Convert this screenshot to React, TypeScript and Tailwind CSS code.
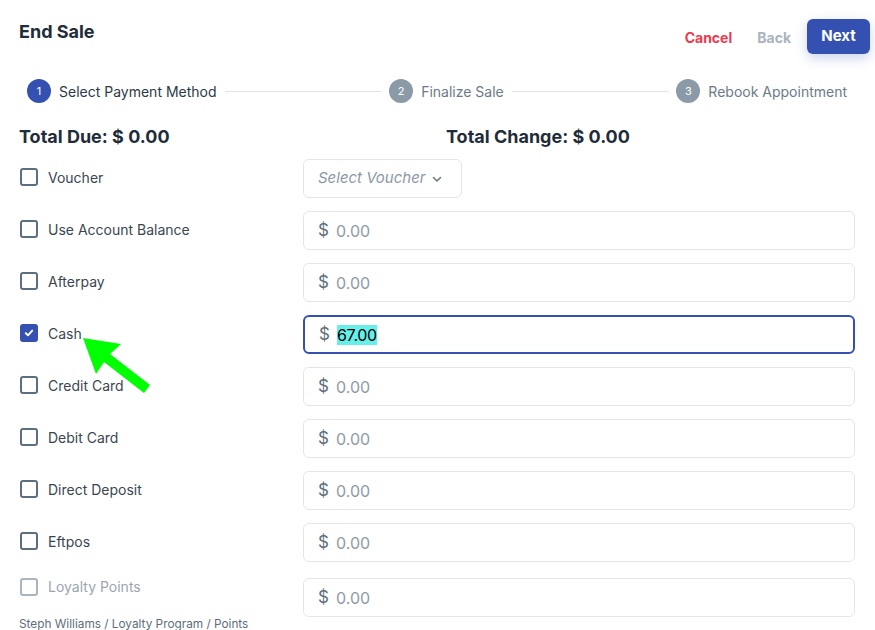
import React from "react";

const rows = [
  { label: "Voucher", kind: "voucher" },
  { label: "Use Account Balance" },
  { label: "Afterpay" },
  { label: "Cash", checked: true, value: "67.00" },
  { label: "Credit Card" },
  { label: "Debit Card" },
  { label: "Direct Deposit" },
  { label: "Eftpos" },
];

function Checkbox({ checked, disabled }: { checked?: boolean; disabled?: boolean }) {
  if (checked) {
    return (
      <div className="w-[18px] h-[18px] rounded-[3px] bg-[#3451b2] flex items-center justify-center shrink-0">
        <svg width="10" height="10" viewBox="0 0 10 10" fill="none">
          <path d="M1.8 5.2 L4 7.3 L8.2 2.6" stroke="white" strokeWidth="1.9" strokeLinecap="round" strokeLinejoin="round" />
        </svg>
      </div>
    );
  }
  return (
    <div
      className={
        "w-[18px] h-[18px] rounded-[3px] border-2 shrink-0 bg-white " +
        (disabled ? "border-[#a9b5c0]" : "border-[#5d6f7f]")
      }
    />
  );
}

function MoneyInput({ value, focused }: { value?: string; focused?: boolean }) {
  return (
    <div
      className={
        "h-[39px] flex items-center rounded-[6px] bg-white pl-[14px] " +
        (focused ? "border-2 border-[#3451b2] pl-[13px]" : "border border-[#e3e6e9]")
      }
    >
      <span className="text-[17px] text-[#5f6f7e] w-[18px]">$</span>
      {value ? (
        <span className="text-[16px] text-black bg-[#66efe9] leading-[20px] tracking-[-0.3px]">{value}</span>
      ) : (
        <span className="text-[16px] text-[#8d9aa6]">0.00</span>
      )}
    </div>
  );
}

function Step({ n, label, active }: { n: number; label: string; active?: boolean }) {
  return (
    <div className="flex items-center gap-2 shrink-0">
      <div
        className={
          "w-6 h-6 rounded-full flex items-center justify-center text-[11px] text-white " +
          (active ? "bg-[#3451b2]" : "bg-[#8a9aa7]")
        }
      >
        {n}
      </div>
      <span className={"text-[14px] " + (active ? "text-[#2c3a47]" : "text-[#6b7b89]")}>{label}</span>
    </div>
  );
}

export default function App() {
  return (
    <div
      className="relative w-[875px] h-[630px] bg-white px-[19px] overflow-hidden"
      style={{ fontFamily: "Inter, 'Noto Sans', sans-serif" }}
    >
      {/* Header */}
      <div className="flex items-start justify-between pt-[19px] mr-[-14px]">
        <h1 className="text-[18px] font-bold text-[#1f2d3a] leading-[24px] mt-px">End Sale</h1>
        <div className="flex items-center">
          <span className="text-[14px] font-bold text-[#ec3a4f] mr-[25px] mt-px">Cancel</span>
          <span className="text-[14px] font-bold text-[#a9b4bf] mr-[16px] mt-px">Back</span>
          <button className="h-[35px] w-[63px] rounded-[6px] bg-[#3451b2] text-white text-[15px] font-bold shadow-[0_4px_12px_rgba(52,81,178,0.25)]">
            Next
          </button>
        </div>
      </div>

      {/* Stepper */}
      <div className="flex items-center px-2 mt-[25px] mr-px">
        <Step n={1} label="Select Payment Method" active />
        <div className="flex-1 h-px bg-[#e1e4e7] mx-2" />
        <Step n={2} label="Finalize Sale" />
        <div className="flex-1 h-px bg-[#e1e4e7] mx-2" />
        <Step n={3} label="Rebook Appointment" />
      </div>

      {/* Totals */}
      <div className="grid grid-cols-[427px_1fr] mt-[22px]">
        <div className="text-[18px] font-bold text-[#1f2d3a] leading-[24px]">Total Due: $ 0.00</div>
        <div className="text-[18px] font-bold text-[#1f2d3a] leading-[24px]">Total Change: $ 0.00</div>
      </div>

      {/* Rows */}
      <div className="flex flex-col gap-[13px] mt-[10px] mr-px">
        {rows.map((r) => (
          <div key={r.label} className="grid grid-cols-[284px_1fr] items-center">
            <div className="flex items-center gap-[10px] pl-px mt-[-3px]">
              <Checkbox checked={r.checked} />
              <span className="text-[14px] text-[#3a4652]">{r.label}</span>
            </div>
            {r.kind === "voucher" ? (
              <div className="w-[159px] h-[39px] rounded-[6px] border border-[#e3e6e9] flex items-center pl-[14px] gap-[6px]">
                <span className="text-[15px] italic text-[#8a98a5]">Select Voucher</span>
                <svg width="12" height="12" viewBox="0 0 12 12" fill="none">
                  <path d="M2.5 4.5 L6 8 L9.5 4.5" stroke="#6b7b89" strokeWidth="1.6" strokeLinecap="round" strokeLinejoin="round" />
                </svg>
              </div>
            ) : (
              <MoneyInput value={r.value} focused={r.checked} />
            )}
          </div>
        ))}
        <div className="grid grid-cols-[284px_1fr] items-start mt-[3px]">
          <div className="flex flex-col">
            <div className="flex items-center gap-[10px] pl-px h-[18px]">
              <Checkbox disabled />
              <span className="text-[14px] leading-[18px] text-[#9aa6b1]">Loyalty Points</span>
            </div>
            <div className="text-[11.8px] text-[#5e6d7a] leading-[12px] mt-[22px] whitespace-nowrap">
              Steph Williams / Loyalty Program / Points
            </div>
          </div>
          <MoneyInput />
        </div>
      </div>

      {/* Green annotation arrow */}
      <svg className="absolute left-0 top-0 pointer-events-none" width="875" height="630">
        <polygon points="83,338 121,344 110,354 150,385 144,393 104,362 96,374" fill="#00ff00" />
      </svg>
    </div>
  );
}
